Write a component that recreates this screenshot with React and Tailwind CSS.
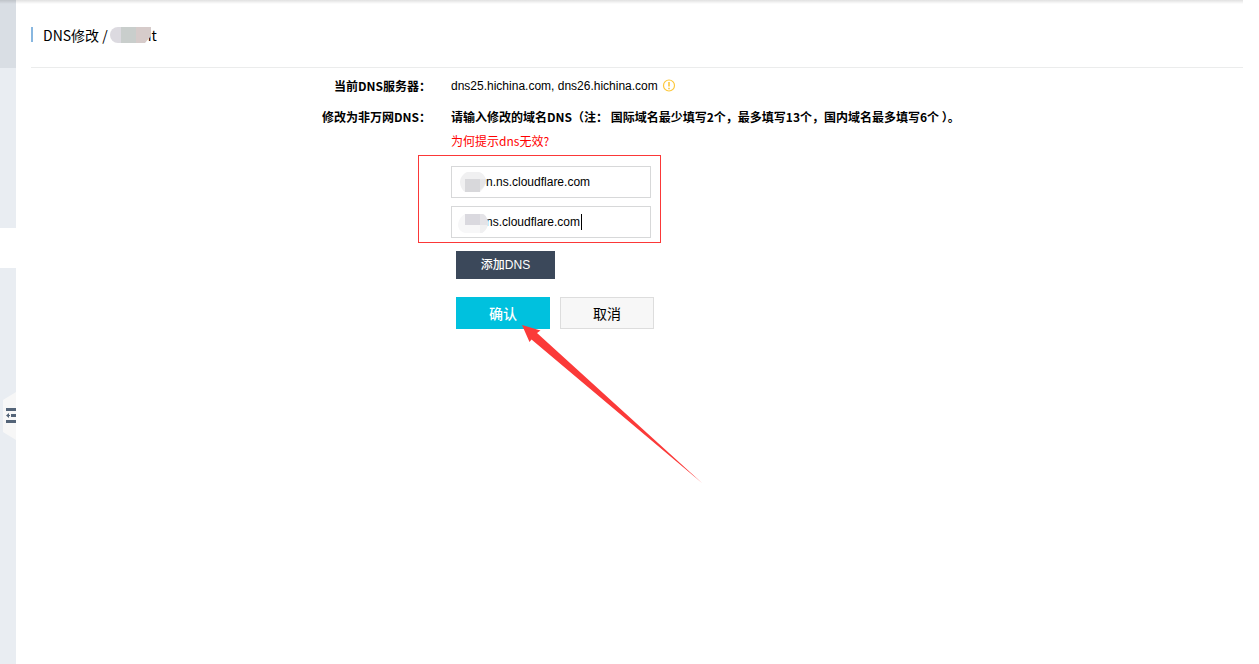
import { useState } from 'react'

function Sidebar() {
  return (
    <aside className="relative flex w-4 shrink-0 flex-col bg-[#e9edf2]">
      <div className="h-17 bg-[#d9dee4]" />
      <div className="mt-40 h-10 bg-white" />
      <button type="button" aria-label="收起菜单" className="absolute top-98 left-0 block h-12 w-4">
        <svg width="16" height="48" viewBox="0 0 16 48" shapeRendering="crispEdges">
          <path d="M3 8 16 0v48L3 40z" fill="#f7f7f7" shapeRendering="auto" />
          <path d="M6 16h10v3H6zM11 22h5v3h-5zM6 28h10v3H6z" fill="#546478" />
          <path d="M6 23.5 9 21v5zM8 23h2v1H8z" fill="#546478" shapeRendering="auto" />
        </svg>
      </button>
    </aside>
  )
}

function Row({ label, children }) {
  return (
    <div className="flex gap-5">
      <div className="w-100 shrink-0 text-right font-bold">{label}</div>
      <div>{children}</div>
    </div>
  )
}

function DnsInput({ label, value, onChange, children }) {
  return (
    <div className="relative w-50">
      <input
        type="text"
        aria-label={label}
        value={value}
        onChange={(e) => onChange(e.target.value)}
        className="block h-8 w-full border border-[#d7d8d9] bg-white pr-2 pl-[34px] font-['Liberation_Sans',Arial,sans-serif] text-xs outline-none"
      />
      {children}
    </div>
  )
}

export default function App() {
  const [servers, setServers] = useState(['n.ns.cloudflare.com', 'ns.cloudflare.com'])

  const updateServer = (index, value) => {
    setServers(servers.map((server, i) => (i === index ? value : server)))
  }

  const addServer = () => setServers([...servers, ''])

  return (
    <div className="flex min-h-screen bg-white font-['Noto_Sans_CJK_SC',sans-serif] text-xs leading-5 text-black">
      <Sidebar />
      <main className="relative mr-4 grow pl-[15px]">
        <div className="absolute top-0 -left-4 right-0 h-1 bg-linear-to-b from-black/12 to-transparent" />

        <header className="flex h-17 items-center border-b border-[#ebecec] pt-0.5">
          <span className="h-[15px] w-0.5 bg-[#88b7e0]" />
          <h1 className="ml-2.5 flex items-center text-sm">
            <span>DNS修改 /</span>
            <span className="relative ml-0.5 pl-[38px]">
              it
              <svg className="absolute top-0.5 left-0" width="41" height="16" viewBox="0 0 41 16">
                <defs>
                  <clipPath id="name-mask">
                    <path d="M8 0h33v9l-6 7H8a8 8 0 0 1 0-16z" />
                  </clipPath>
                </defs>
                <g clipPath="url(#name-mask)">
                  <path d="M0 0h11v16H0z" fill="#dcdae0" />
                  <path d="M11 0h15v16H11z" fill="#c9cecc" />
                  <path d="M26 0h15v16H26z" fill="#d6cbca" />
                </g>
              </svg>
            </span>
          </h1>
        </header>

        <form className="pt-2" onSubmit={(e) => e.preventDefault()}>
          <Row label="当前DNS服务器：">
            <div className="flex items-center gap-1">
              <span className="font-['Liberation_Sans',Arial,sans-serif]">dns25.hichina.com, dns26.hichina.com</span>
              <svg width="14" height="14" viewBox="0 0 14 14" fill="none" stroke="#fdc83c">
                <circle cx="7" cy="6.5" r="5.5" strokeWidth="1.2" />
                <path d="M7 3v4.5M7 8.7v1.6" strokeWidth="1.6" />
              </svg>
            </div>
          </Row>

          <div className="mt-[11px]">
            <Row label="修改为非万网DNS：">
              <p className="font-bold">请输入修改的域名DNS（注： 国际域名最少填写2个，最多填写13个，国内域名最多填写6个 ）。</p>
              <a href="#dns-help" className="mt-1 block w-fit text-[#ff0000]">为何提示dns无效?</a>

              <div className="relative mt-[15px] flex w-50 flex-col gap-2">
                <div className="pointer-events-none absolute -top-[11px] -right-2.5 -bottom-[5px] -left-[33px] border border-[#fb3838]" />
                {servers.map((server, index) => (
                  <DnsInput key={index} label={`DNS ${index + 1}`} value={server} onChange={(value) => updateServer(index, value)}>
                    {index === 0 && (
                      <svg className="pointer-events-none absolute top-1.5 left-2" width="28" height="22" viewBox="0 0 28 22">
                        <path d="M8 0h12c4 1 7 5 7 9s-3 8-6 11H6C3 18 1 14 1 10s3-8 7-10z" fill="#f0f0f1" />
                        <path d="M6 7h15v13H6z" fill="#d8d8db" />
                        <path d="M21 7h6c0 5-2 8-6 11z" fill="#e5e5e7" />
                      </svg>
                    )}
                    {index === 1 && (
                      <>
                        <svg className="pointer-events-none absolute top-1.5 left-1.5" width="32" height="22" viewBox="0 0 32 22">
                          <path d="M8 2h18c3 1 5 5 5 9s-3 8-6 10H8c-4-1-7-4-7-8s3-9 7-11z" fill="#f7f7f8" />
                          <path d="M8 2h15v11H8z" fill="#dad9df" />
                          <path d="M23 2h3c3 1 5 6 5 11h-8z" fill="#e4e3e7" />
                          <path d="M23 13h8c-1 4-4 7-6 8h-2z" fill="#f0f0f1" />
                        </svg>
                        <span className="pointer-events-none absolute top-2 left-[130px] h-4 w-px bg-black" />
                      </>
                    )}
                  </DnsInput>
                ))}
              </div>

              <div className="pl-[5px]">
                <button
                  type="button"
                  onClick={addServer}
                  className="mt-[13px] block h-7 w-[99px] bg-[#3b485a] font-['Liberation_Sans','Noto_Sans_CJK_SC',sans-serif] font-medium text-white"
                >
                  添加DNS
                </button>
                <div className="relative mt-[18px] flex gap-2.5 text-sm">
                  <button type="submit" className="h-8 w-[94px] bg-[#00c1de] font-medium text-white">确认</button>
                  <button type="button" className="h-8 w-[94px] border border-[#dddddd] bg-[#f7f7f7]">取消</button>
                  <svg className="pointer-events-none absolute top-7 left-16" width="184" height="160" viewBox="0 0 184 160">
                    <path d="M2 0 20.5 5.5 17 8 182 158 11.5 14.5 9.5 17z" fill="#fb3a39" />
                  </svg>
                </div>
              </div>
            </Row>
          </div>
        </form>
      </main>
    </div>
  )
}
